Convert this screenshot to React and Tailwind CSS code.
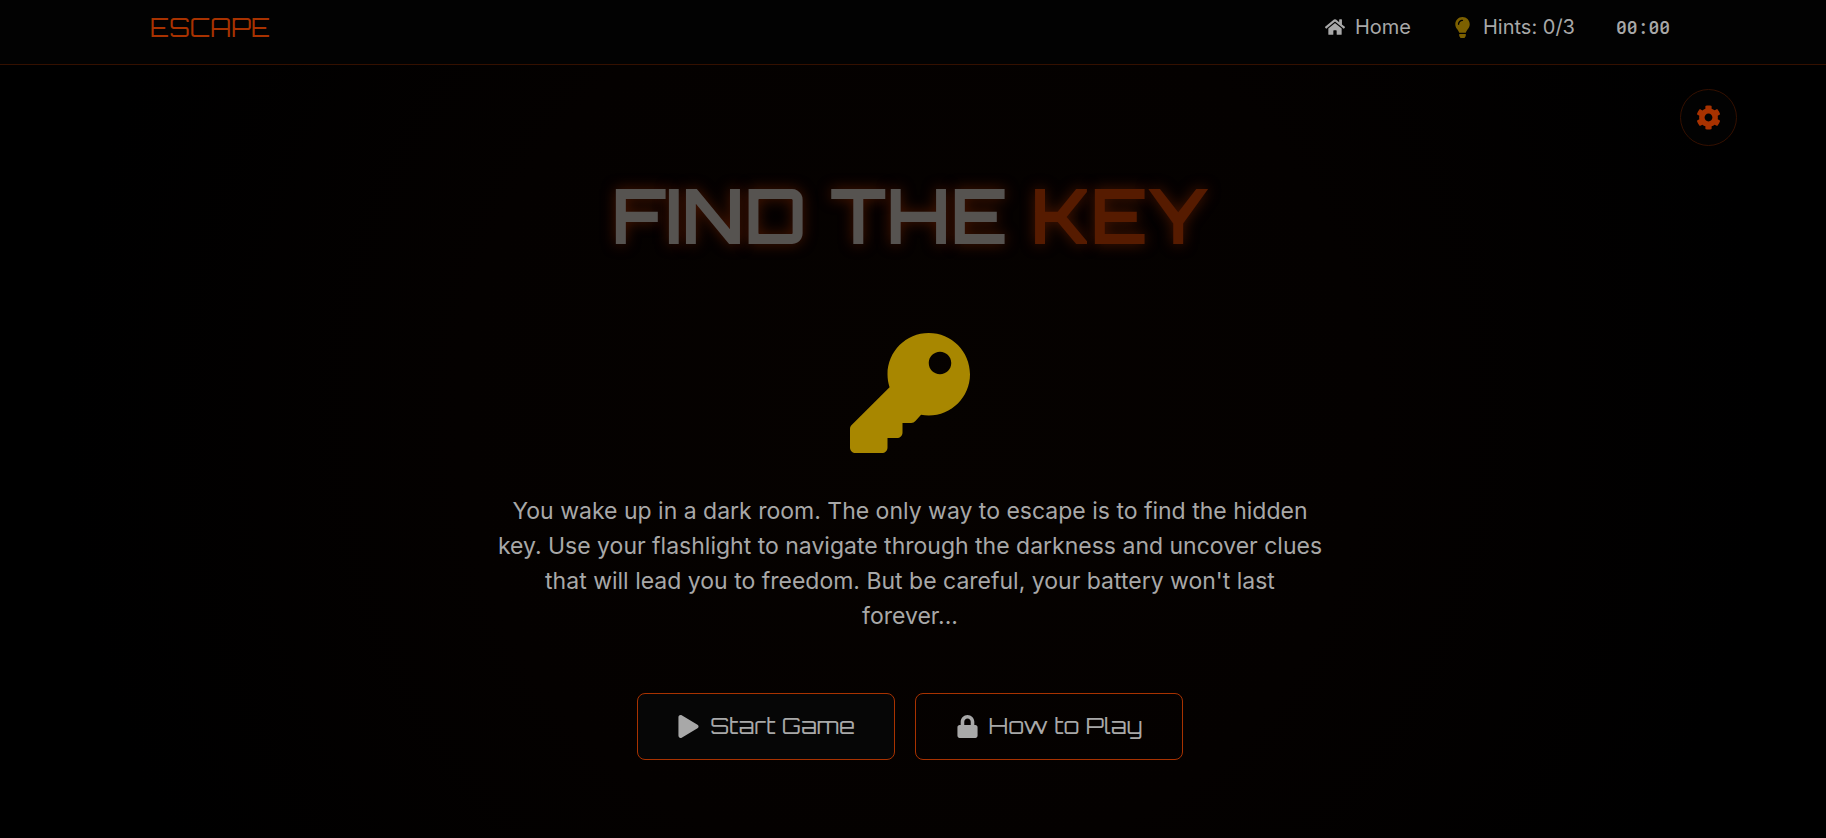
import { FaCog, FaHome, FaKey, FaLightbulb, FaLock, FaPlay } from "react-icons/fa";

const displayFont = "font-['Orbitron','DejaVu_Sans',sans-serif]";

function Header() {
  return (
    <header className="border-b border-[#341000] bg-[#020202]">
      <div className="flex h-16 items-center justify-between pr-[156px] pb-2.5 pl-[150px]">
        <a href="#" className={`${displayFont} text-[25px] leading-none text-[#a83200]`}>
          ESCAPE
        </a>
        <nav className="flex items-center gap-[41px] text-[20px] leading-6 text-[#a8a8a8]">
          <a href="#" className="flex items-center gap-2.5">
            <FaHome className="size-5" />
            Home
          </a>
          <span className="flex items-center gap-2.5">
            <FaLightbulb className="size-[21px] text-[#7c6000]" />
            Hints: 0/3
          </span>
          <time className="font-['Roboto_Mono','DejaVu_Sans_Mono',monospace] text-[18px] font-medium">00:00</time>
        </nav>
      </div>
    </header>
  );
}

export default function App() {
  return (
    <div className="relative flex min-h-screen flex-col bg-black bg-[radial-gradient(circle_at_center,#060200_0%,#040100_45%,#000000_85%)] font-['Inter',sans-serif]">
      <Header />
      <button
        type="button"
        aria-label="Settings"
        className="absolute top-[89px] right-[89px] flex size-[57px] items-center justify-center rounded-full border border-[#341000] bg-[#020202] text-[#a83200]"
      >
        <FaCog className="size-[25px]" />
      </button>
      <main className="flex flex-col items-center pt-[106px] pr-[30px] pb-16 pl-6 text-center">
        <h1
          className={`${displayFont} text-[75px] leading-[88px] font-bold text-[#565350] [text-shadow:0_0_14px_#4a1600]`}
        >
          FIND THE <span className="text-[#561b00]">KEY</span>
        </h1>
        <FaKey className="mt-[74px] size-[120px] text-[#a88700]" />
        <p className="mt-[41px] max-w-[828px] text-[23px] leading-[35px] text-[#a8a8a8]">
          You wake up in a dark room. The only way to escape is to find the hidden key. Use your flashlight to
          navigate through the darkness and uncover clues that will lead you to freedom. But be careful, your
          battery won't last forever...
        </p>
        <div className={`${displayFont} mt-[59px] flex flex-wrap justify-center gap-5 text-[23px] text-[#a8a8a8]`}>
          <button
            type="button"
            className="flex h-[67px] min-w-[258px] items-center justify-center gap-2.5 rounded-lg border border-[#a83200] bg-[#060606] px-8"
          >
            <FaPlay />
            Start Game
          </button>
          <button
            type="button"
            className="flex h-[67px] min-w-[268px] items-center justify-center gap-2.5 rounded-lg border border-[#a83200] px-8"
          >
            <FaLock />
            How to Play
          </button>
        </div>
      </main>
    </div>
  );
}
